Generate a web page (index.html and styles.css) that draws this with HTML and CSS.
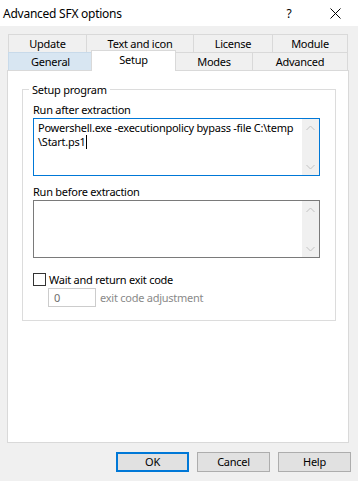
FILE: index.html
```html
<!DOCTYPE html>
<html lang="en">
  <head>
    <meta charset="utf-8">
    <title>Advanced SFX options</title>
    <link rel="stylesheet" href="styles.css">
  </head>
  <body>
    <div class="titlebar">
      <span class="title">Advanced SFX options</span>
      <span class="caption-btn">?</span>
      <span class="caption-btn">
        <svg width="11" height="11" viewBox="0 0 11 11"><path d="M0.5 0.5 L10.5 10.5 M10.5 0.5 L0.5 10.5" stroke="#000" stroke-width="1" fill="none"/></svg>
      </span>
    </div>

    <div class="tabs">
      <div class="tabrow row1">
        <div class="tab">Update</div>
        <div class="tab">Text and icon</div>
        <div class="tab">License</div>
        <div class="tab last">Module</div>
      </div>
      <div class="tabrow row2">
        <div class="tab hot">General</div>
        <div class="tab selected">Setup</div>
        <div class="tab">Modes</div>
        <div class="tab last">Advanced</div>
      </div>
    </div>

    <div class="panel">
      <div class="group">
        <span class="legend">Setup program</span>

        <div class="field-label">Run after extraction</div>
        <div class="edit focused">
          <div class="edit-text">
            <div>Powershell.exe -executionpolicy bypass -file C:\temp</div>
            <div>\Start.ps1<span class="caret"></span></div>
          </div>
          <div class="vscroll">
            <span class="arrow"><svg width="9" height="6" viewBox="0 0 9 6"><path d="M0.5 5 L4.5 1 L8.5 5" stroke="#c2c2c2" fill="none"/></svg></span>
            <span class="arrow"><svg width="9" height="6" viewBox="0 0 9 6"><path d="M0.5 1 L4.5 5 L8.5 1" stroke="#c2c2c2" fill="none"/></svg></span>
          </div>
        </div>

        <div class="field-label second">Run before extraction</div>
        <div class="edit">
          <div class="edit-text"></div>
          <div class="vscroll">
            <span class="arrow"><svg width="9" height="6" viewBox="0 0 9 6"><path d="M0.5 5 L4.5 1 L8.5 5" stroke="#c2c2c2" fill="none"/></svg></span>
            <span class="arrow"><svg width="9" height="6" viewBox="0 0 9 6"><path d="M0.5 1 L4.5 5 L8.5 1" stroke="#c2c2c2" fill="none"/></svg></span>
          </div>
        </div>

        <div class="check-row">
          <span class="checkbox"></span>
          <span>Wait and return exit code</span>
        </div>
        <div class="exit-row">
          <span class="small-input">0</span>
          <span class="disabled-text">exit code adjustment</span>
        </div>
      </div>
    </div>

    <div class="buttons">
      <span class="btn default">OK</span>
      <span class="btn">Cancel</span>
      <span class="btn">Help</span>
    </div>
  </body>
</html>
```

FILE: styles.css
```css
body{
  margin:0;
  width:358px;
  height:481px;
  background-color:#f0f0f0;
  font-family:"Noto Sans", "Open Sans", sans-serif;
  font-size:11px;
  letter-spacing:-0.25px;
  color:#000;
  overflow:hidden;
}

.titlebar{
  height:26px;
  background-color:#fff;
  display:flex;
  align-items:center;
}
.title{
  flex:1;
  padding-left:3px;
  font-size:12px;
}
.caption-btn{
  width:46px;
  height:26px;
  display:flex;
  align-items:center;
  justify-content:center;
  font-size:12px;
}

.tabs{
  padding:8px 0 0 8px;
}
.tabrow{
  display:grid;
  height:18px;
}
.row1{grid-template-columns:78px 107px 79px 76px;}
.row2{grid-template-columns:84px 83px 77px 96px;}
.tab{
  border:1px solid #d9d9d9;
  border-right:none;
  border-bottom:none;
  text-align:center;
  line-height:17px;
  background-color:#f0f0f0;
}
.tab.last{border-right:1px solid #d9d9d9;}
.tab.hot{
  background-color:#d8e6f2;
  border-color:#c8daea;
}
.tab.selected{
  position:relative;
  z-index:1;
  margin:-2px -1px -1px -1px;
  background-color:#fff;
  border-right:1px solid #d9d9d9;
  line-height:17px;
}

.panel{
  margin-left:7px;
  width:342px;
  height:373px;
  box-sizing:border-box;
  border:1px solid #d9d9d9;
  background-color:#fff;
  padding:18px 0 0 14px;
}
.group{
  width:314px;
  height:232px;
  box-sizing:border-box;
  border:1px solid #dcdcdc;
  padding-left:10px;
}
.legend{
  display:block;
  width:fit-content;
  margin:-8px 0 0 -4px;
  padding:0 3px;
  line-height:15px;
  background-color:#fff;
}
.field-label{
  line-height:16px;
  margin-top:5px;
}
.field-label.second{margin-top:8px;}

.edit{
  display:flex;
  width:287px;
  height:58px;
  box-sizing:border-box;
  border:1px solid #7a7a7a;
}
.edit.focused{border-color:#0078d7;}
.edit-text{
  flex:1;
  min-width:0;
  padding:2px 4px;
  line-height:14px;
  white-space:nowrap;
}
.caret{
  display:inline-block;
  width:1px;
  height:14px;
  background-color:#000;
  vertical-align:-3px;
}
.vscroll{
  width:17px;
  flex-shrink:0;
  background-color:#f0f0f0;
  display:flex;
  flex-direction:column;
  justify-content:space-between;
}
.arrow{
  height:17px;
  display:flex;
  align-items:center;
  justify-content:center;
}

.check-row{
  display:flex;
  align-items:center;
  margin-top:15px;
  height:13px;
}
.checkbox{
  width:13px;
  height:13px;
  box-sizing:border-box;
  border:1px solid #333;
  margin-right:3px;
}
.exit-row{
  display:flex;
  align-items:center;
  margin:2px 0 0 15px;
}
.small-input{
  width:48px;
  height:19px;
  box-sizing:border-box;
  border:1px solid #cccccc;
  color:#6d6d6d;
  padding-left:5px;
  line-height:17px;
  margin-right:4px;
}
.disabled-text{color:#8a8a8a;}

.buttons{
  display:flex;
  justify-content:flex-end;
  gap:8px;
  margin-top:9px;
  padding-right:7px;
}
.btn{
  width:73px;
  height:20px;
  box-sizing:border-box;
  border:1px solid #adadad;
  background-color:#e1e1e1;
  text-align:center;
  line-height:18px;
}
.btn.default{
  border:2px solid #0078d7;
  line-height:16px;
}
```
